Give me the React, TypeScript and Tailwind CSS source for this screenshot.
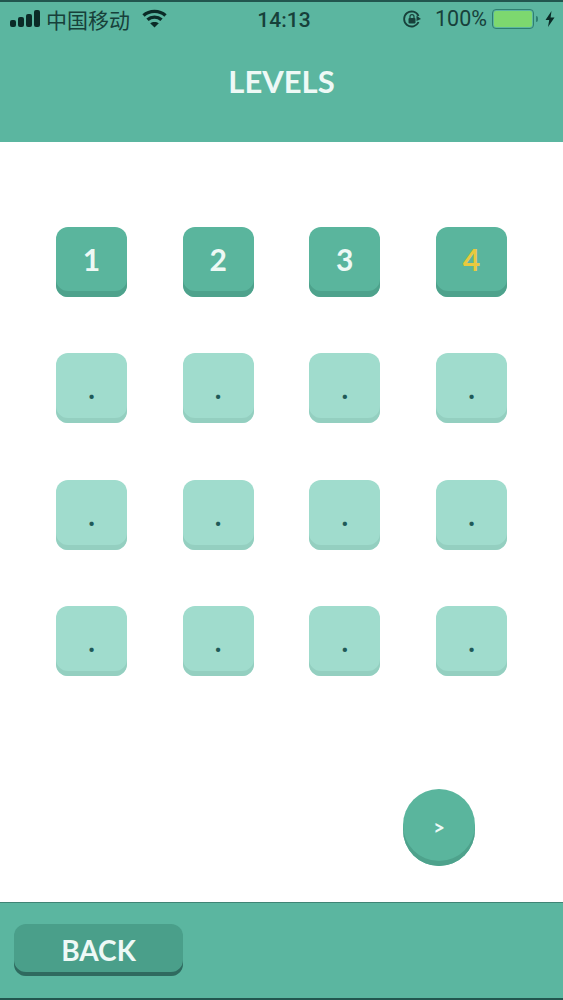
const LEVELS = ['1', '2', '3', '4', '.', '.', '.', '.', '.', '.', '.', '.', '.', '.', '.', '.'];

const StatusBar = () => (
    <div className="h-[34px] flex items-center relative text-[#17403a] font-['Roboto','Noto_Sans_CJK_SC',sans-serif]">
        {/* Signal + carrier */}
        <div className="flex items-center ml-[10px]">
            <svg width="30" height="20" viewBox="0 0 30 20" fill="#0b2b27">
                <rect x="0" y="11" width="6" height="7" rx="2" />
                <rect x="8" y="8" width="6" height="10" rx="2" />
                <rect x="16" y="5" width="6" height="13" rx="2" />
                <rect x="24" y="1" width="6" height="17" rx="2" />
            </svg>
            <span className="ml-[6px] text-[21px] leading-none font-['Noto_Sans_CJK_SC',sans-serif]">中国移动</span>
            <svg className="ml-[12px]" width="25" height="20" viewBox="0 0 25 20" fill="none" stroke="#0b2b27" strokeWidth="3.4">
                <path d="M1.5 6.5 C7.5 1 17.5 1 23.5 6.5" />
                <path d="M5.5 10.8 C9.5 7.2 15.5 7.2 19.5 10.8" />
                <path d="M12.5 18.5 L8.2 14.2 C10.5 12.6 14.5 12.6 16.8 14.2 Z" fill="#0b2b27" stroke="none" />
            </svg>
        </div>
        {/* Clock */}
        <span className="absolute left-[249px] top-[6px] w-[70px] text-center text-[21px] leading-[24px] font-medium">14:13</span>
        {/* Lock, battery */}
        <div className="ml-auto flex items-center mr-[8px]">
            <svg width="20" height="20" viewBox="0 0 20 20" fill="none">
                <path d="M16.5 13 A7.5 7.5 0 1 1 16.5 7" stroke="#17403a" strokeWidth="1.8" />
                <path d="M14.5 6.5 L19 10 L14.5 12 Z" fill="#17403a" />
                <rect x="6.5" y="9" width="7" height="5.5" rx="1" fill="#17403a" />
                <path d="M8 9 V7.6 A2 2 0 0 1 12 7.6 V9" stroke="#17403a" strokeWidth="1.2" />
            </svg>
            <span className="ml-[13px] text-[21.5px] leading-none">100%</span>
            <div className="ml-[5px] w-[42px] h-[20px] rounded-[4px] border-[1.5px] border-[#2f7f70] p-[1px]">
                <div className="w-full h-full rounded-[2px] bg-[#7dd86f]" />
            </div>
            <div className="ml-[2px] w-[2px] h-[6px] bg-[#2f7f70] rounded-r-sm" />
            <svg className="ml-[7px]" width="10" height="16" viewBox="0 0 10 16" fill="#0b2b27">
                <path d="M6.5 0 L0.5 9 H4.2 L3 16 L9.5 6.5 H5.6 Z" />
            </svg>
        </div>
    </div>
);

const LevelButton = ({ label, index }: { label: string; index: number }) => {
    const isOpen = index < 4;
    const isCurrent = index === 3;

    return (
        <div
            className={`w-[71px] h-[70px] rounded-[12px] flex items-center justify-center ${
                isOpen
                    ? 'bg-[#5ab59d] shadow-[inset_0_-6px_0_#4ea28c]'
                    : 'bg-[#a0dccd] shadow-[inset_0_-5px_0_#94cfc0]'
            }`}
        >
            {isOpen ? (
                <span className={`text-[30px] leading-none font-bold mb-[6px] font-['Lato',sans-serif] ${isCurrent ? 'text-[#e8c93f]' : 'text-[#eef9f5]'}`}>
                    {label}
                </span>
            ) : (
                <span className="text-[28px] leading-none font-bold text-[#1f5a58]">{label}</span>
            )}
        </div>
    );
};

export default function App() {
    return (
        <div className="w-[563px] h-[1000px] flex flex-col bg-white overflow-hidden font-['Lato',sans-serif]">
            {/* Header */}
            <header className="h-[142px] bg-[#5bb6a0] border-t-2 border-[#22564f]">
                <StatusBar />
                <h1 className="mt-[8px] text-center text-[31px] font-bold text-[#eef9f6] h-[74px] flex items-center justify-center">
                    LEVELS
                </h1>
            </header>

            {/* Grid */}
            <main className="flex-1 relative">
                <div className="grid grid-cols-[repeat(4,71px)] justify-between gap-y-[56.33px] mt-[85px] mx-[56px]">
                    {LEVELS.map((label, i) => (
                        <LevelButton key={i} label={label} index={i} />
                    ))}
                </div>
                <div className="flex justify-end mt-[113px] mr-[88px]">
                    <div className="w-[72px] h-[77px] rounded-full bg-[#5ab59d] shadow-[inset_0_-5px_0_#4ea28c] flex items-center justify-center text-[#eef9f6] text-[20px] font-bold">
                        &gt;
                    </div>
                </div>
            </main>

            {/* Footer */}
            <footer className="h-[98px] bg-[#5bb6a0] border-t border-[#3f8475] border-b-2 border-b-[#22564f] pl-[14px] pt-[21px]">
                <div className="w-[169px] h-[52px] rounded-[12px] bg-[#4a9f8a] shadow-[inset_0_-4px_0_#2f6a5f] flex items-center justify-center pb-[1px] text-[#eef9f6] text-[28px] font-bold">
                    BACK
                </div>
            </footer>
        </div>
    );
}
